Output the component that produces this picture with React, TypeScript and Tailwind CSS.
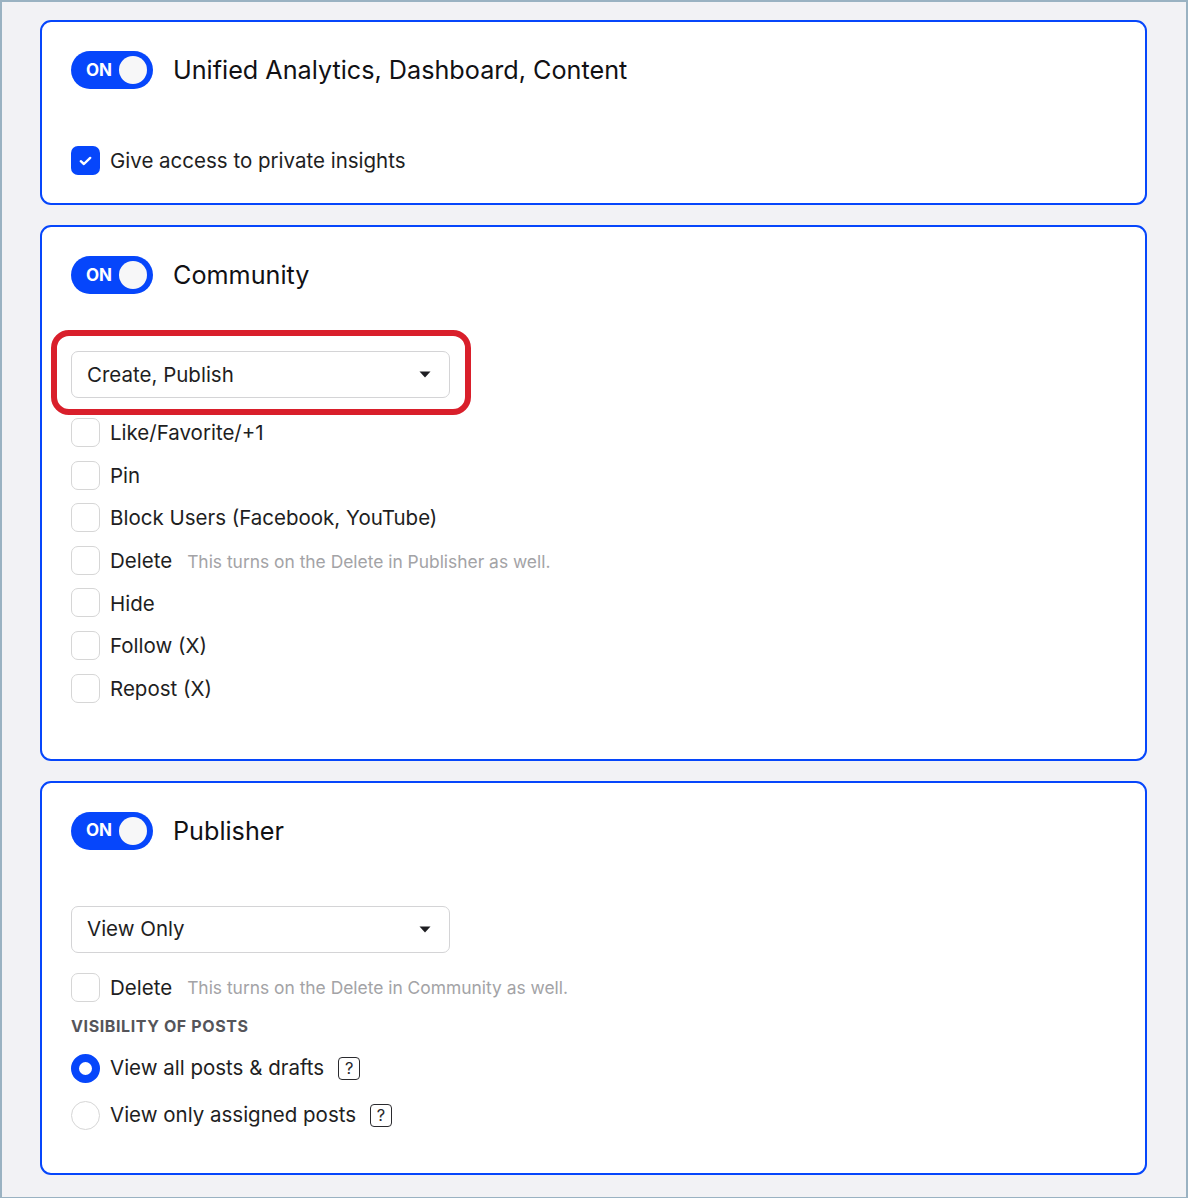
import React from "react";

const BLUE = "bg-[#0646fb]";

function Toggle() {
  return (
    <div className={`relative flex h-[38px] w-[82px] shrink-0 items-center rounded-full ${BLUE}`}>
      <span className="pl-[15px] text-[17px] font-bold leading-none text-white">ON</span>
      <span className="absolute right-[6px] top-[5px] h-[28px] w-[28px] rounded-full bg-[#f7f7f8]" />
    </div>
  );
}

function Box({ checked = false }: { checked?: boolean }) {
  if (checked) {
    return (
      <span className={`flex h-[29px] w-[29px] shrink-0 items-center justify-center rounded-[7px] ${BLUE}`}>
        <svg width="13" height="10" viewBox="0 0 13 10" fill="none">
          <path d="M1.8 5.2 L4.9 8 L11.2 1.9" stroke="white" strokeWidth="2.4" strokeLinecap="round" strokeLinejoin="round" />
        </svg>
      </span>
    );
  }
  return <span className="h-[29px] w-[29px] shrink-0 rounded-[7px] border border-[#d6d6d6] bg-white" />;
}

function CheckRow({ label, hint, checked }: { label: string; hint?: string; checked?: boolean }) {
  return (
    <div className="flex h-[29px] items-center">
      <Box checked={checked} />
      <span className="ml-[10px] pt-[2px] text-[20.5px] leading-none text-[#1e1e22]">{label}</span>
      {hint && <span className="ml-[15px] pt-[2px] text-[17.4px] leading-none text-[#a3a3a6]">{hint}</span>}
    </div>
  );
}

function Dropdown({ value, highlight }: { value: string; highlight?: boolean }) {
  return (
    <div className="relative w-[379px]">
      {highlight && (
        <div className="pointer-events-none absolute -bottom-[17px] -left-[20px] -right-[21px] -top-[21px] rounded-[18px] border-[6px] border-[#d91f2b]" />
      )}
      <div className="relative flex h-[47px] items-center justify-between rounded-[7px] border border-[#d4d4d6] bg-white pl-[15px] pr-[18px]">
        <span className="pt-[1px] text-[20.5px] leading-none text-[#1e1e22]">{value}</span>
        <svg width="12" height="7" viewBox="0 0 12 7">
          <path d="M0.5 0.5 H11.5 L6 6.5 Z" fill="#1e1e22" />
        </svg>
      </div>
    </div>
  );
}

function Help() {
  return (
    <span className="ml-[14px] flex h-[23px] w-[22px] items-center justify-center rounded-[4px] border-[1.5px] border-[#2a2a2e] text-[16.5px] leading-none text-[#2a2a2e]">
      ?
    </span>
  );
}

function Radio({ label, selected }: { label: string; selected?: boolean }) {
  return (
    <div className="flex h-[29px] items-center">
      {selected ? (
        <span className="h-[29px] w-[29px] shrink-0 rounded-full border-[8px] border-[#0646fb] bg-white" />
      ) : (
        <span className="h-[29px] w-[29px] shrink-0 rounded-full border border-[#d6d6d6] bg-white" />
      )}
      <span className="ml-[10px] pt-[1px] text-[20.5px] leading-none text-[#1e1e22]">{label}</span>
      <Help />
    </div>
  );
}

function Header({ title }: { title: string }) {
  return (
    <div className="flex items-center">
      <Toggle />
      <span className="ml-[20px] pt-[2px] text-[25.2px] leading-none text-[#111114]">{title}</span>
    </div>
  );
}

function Card({ children, className = "" }: { children: React.ReactNode; className?: string }) {
  return (
    <div className={`rounded-[11px] border-2 border-[#0646fb] bg-white pl-[29px] pr-[29px] pt-[29px] ${className}`}>
      {children}
    </div>
  );
}

export default function App() {
  return (
    <div
      className="min-h-[1198px] border-2 border-[#9ab2c2] bg-[#f2f2f5] pb-[22px] pl-[38px] pr-[39px] pt-[18px]"
      style={{ fontFamily: "Inter, 'Noto Sans', sans-serif" }}
    >
      <div className="flex flex-col gap-[20px]">
        <Card className="pb-[28px]">
          <Header title="Unified Analytics, Dashboard, Content" />
          <div className="mt-[57px]">
            <CheckRow label="Give access to private insights" checked />
          </div>
        </Card>

        <Card className="pb-[56px]">
          <Header title="Community" />
          <div className="mt-[57px]">
            <Dropdown value="Create, Publish" highlight />
          </div>
          <div className="mt-[20px] flex flex-col gap-[13.6px]">
            <CheckRow label="Like/Favorite/+1" />
            <CheckRow label="Pin" />
            <CheckRow label="Block Users (Facebook, YouTube)" />
            <CheckRow label="Delete" hint="This turns on the Delete in Publisher as well." />
            <CheckRow label="Hide" />
            <CheckRow label="Follow (X)" />
            <CheckRow label="Repost (X)" />
          </div>
        </Card>

        <Card className="pb-[43px]">
          <Header title="Publisher" />
          <div className="mt-[56px]">
            <Dropdown value="View Only" />
          </div>
          <div className="mt-[20px]">
            <CheckRow label="Delete" hint="This turns on the Delete in Community as well." />
          </div>
          <div className="mt-[16px] text-[16px] font-bold uppercase leading-none tracking-[0.6px] text-[#55555a]">
            Visibility of posts
          </div>
          <div className="mt-[20px] flex flex-col gap-[18px]">
            <Radio label="View all posts & drafts" selected />
            <Radio label="View only assigned posts" />
          </div>
        </Card>
      </div>
    </div>
  );
}
